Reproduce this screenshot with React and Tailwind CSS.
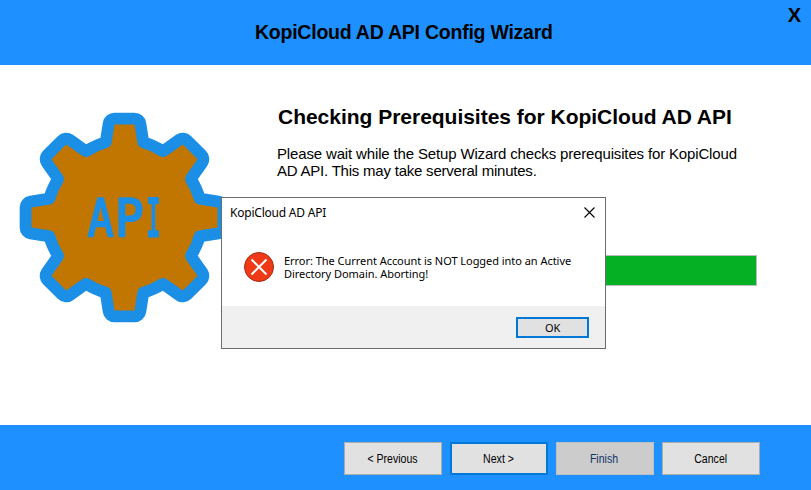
import React from "react";

// One quarter of the gear outline, relative to the gear's centre.
const QUARTER = [
  ["L", [30, -279]],
  ["L", [39, -222]],
  ["Q", [41, -212], [50, -209]],
  ["Q", [79, -201], [106, -184]],
  ["Q", [117, -179], [127, -185]],
  ["L", [175, -219]],
  ["L", [219, -175]],
  ["L", [185, -127]],
  ["Q", [179, -117], [184, -106]],
  ["Q", [201, -79], [209, -50]],
  ["Q", [212, -41], [222, -39]],
  ["L", [279, -30]],
];

function gearPath() {
  let d = "";
  for (let turn = 0; turn < 4; turn++) {
    for (const [cmd, ...points] of QUARTER) {
      const turned = points.map(([x, y]) => {
        for (let i = 0; i < turn; i++) [x, y] = [-y, x];
        return `${x},${y}`;
      });
      d += `${d ? cmd : "M"}${turned.join(" ")} `;
    }
  }
  return d + "Z";
}

function Gear() {
  const d = gearPath();
  return (
    <svg className="block h-[240px] w-[240px] will-change-transform" viewBox="0 0 720 720">
      <g transform="translate(373.5 367.5)">
        <path d={d} fill="#1b8ee6" stroke="#1b8ee6" strokeWidth="71" strokeLinejoin="round" />
        <path d={d} fill="#c07600" />
      </g>
      <g
        className="font-['DejaVu_Sans_Mono',monospace]"
        fill="#1b8ee6"
        stroke="#1b8ee6"
        strokeWidth="7"
        strokeLinejoin="round"
        fontSize="155"
        textAnchor="middle"
        textRendering="geometricPrecision"
      >
        <text transform="translate(302 422.5) scale(.83 1)">A</text>
        <text transform="translate(388 422.5) scale(.92 1)">P</text>
        <text transform="translate(460 422.5) scale(.46 1)" strokeWidth="9">I</text>
      </g>
    </svg>
  );
}

function WizardButton({ children, className = "border border-[#adadad] bg-[#e1e1e1] text-black" }) {
  return (
    <button
      className={`flex h-[33px] w-[98px] items-center justify-center font-['Liberation_Sans',Arial,sans-serif] text-[12px] leading-[14px] ${className}`}
    >
      <span className="mr-px scale-x-[.88]">{children}</span>
    </button>
  );
}

function ErrorDialog() {
  return (
    <div className="absolute left-[221px] top-[197px] flex h-[152px] w-[385px] flex-col border border-[#6b6b6b] bg-white font-['Noto_Sans',sans-serif] text-black">
      <div className="flex h-[29px] items-center justify-between pl-2 pr-[10px]">
        <span className="text-[12px] leading-none tracking-[-0.22px]">KopiCloud AD API</span>
        <svg className="h-[11px] w-[11px]" viewBox="0 0 11 11" stroke="#000" strokeWidth="1.1">
          <path d="M.5 .5 10.5 10.5M10.5 .5 .5 10.5" />
        </svg>
      </div>
      <div className="flex flex-1 pl-[22px] pt-[25px]">
        <svg className="h-[30px] w-[30px] shrink-0" viewBox="0 0 30 30">
          <circle cx="15" cy="15" r="14.5" fill="#f03a17" stroke="#a12b14" />
          <path d="M7.5 7.5 22.5 22.5M22.5 7.5 7.5 22.5" stroke="#fff" strokeWidth="2" />
        </svg>
        <p className="ml-[10px] mt-[2px] whitespace-nowrap text-[11px] leading-[13px] tracking-[-0.04px]">
          Error: The Current Account is NOT Logged into an Active
          <br />
          Directory Domain. Aborting!
        </p>
      </div>
      <div className="flex h-[42px] items-start justify-end bg-[#f0f0f0] pr-4 pt-[11px]">
        <button className="flex h-[21px] w-[73px] items-center justify-center border-2 border-[#0078d7] bg-[#e1e1e1] text-[11px] leading-none tracking-[-0.3px]">
          OK
        </button>
      </div>
    </div>
  );
}

export default function App() {
  return (
    <div className="relative flex h-[490px] w-[811px] flex-col overflow-hidden bg-white font-['Liberation_Sans',Arial,sans-serif] text-black">
      <header className="flex h-[65px] shrink-0 items-start bg-[#1e90ff] font-bold">
        <h1 className="ml-[255px] mt-[21px] flex-1 whitespace-nowrap text-[19.5px] leading-[23px] tracking-[-0.24px]">
          KopiCloud AD API Config Wizard
        </h1>
        <button className="mr-[10px] mt-[4px] text-[20px] leading-[22px]">X</button>
      </header>
      <main className="flex flex-1 items-start">
        <div className="w-[277px] shrink-0 pt-[30px]">
          <Gear />
        </div>
        <div className="w-[480px] pt-[40px]">
          <h2 className="ml-px whitespace-nowrap text-[21px] font-bold leading-[24px] tracking-[-0.02px]">
            Checking Prerequisites for KopiCloud AD API
          </h2>
          <p className="mt-[16px] whitespace-nowrap text-[15px] leading-[17px] tracking-[-0.15px]">
            Please wait while the Setup Wizard checks prerequisites for KopiCloud
            <br />
            <span className="tracking-[-0.22px]">AD API. This may take serveral minutes.</span>
          </p>
          <div className="mt-[76px] h-[31px] border border-[#bcbcbc] bg-[#06b025]" />
        </div>
      </main>
      <footer className="flex h-[65px] shrink-0 gap-2 bg-[#1e90ff] pl-[344px] pt-[17px]">
        <WizardButton>&lt; Previous</WizardButton>
        <WizardButton className="border-2 border-[#0078d7] bg-[#e1e1e1] text-black">Next &gt;</WizardButton>
        <WizardButton className="border border-[#bfbfbf] bg-[#cccccc] text-[#0f3468]">Finish</WizardButton>
        <WizardButton>Cancel</WizardButton>
      </footer>
      <ErrorDialog />
    </div>
  );
}
